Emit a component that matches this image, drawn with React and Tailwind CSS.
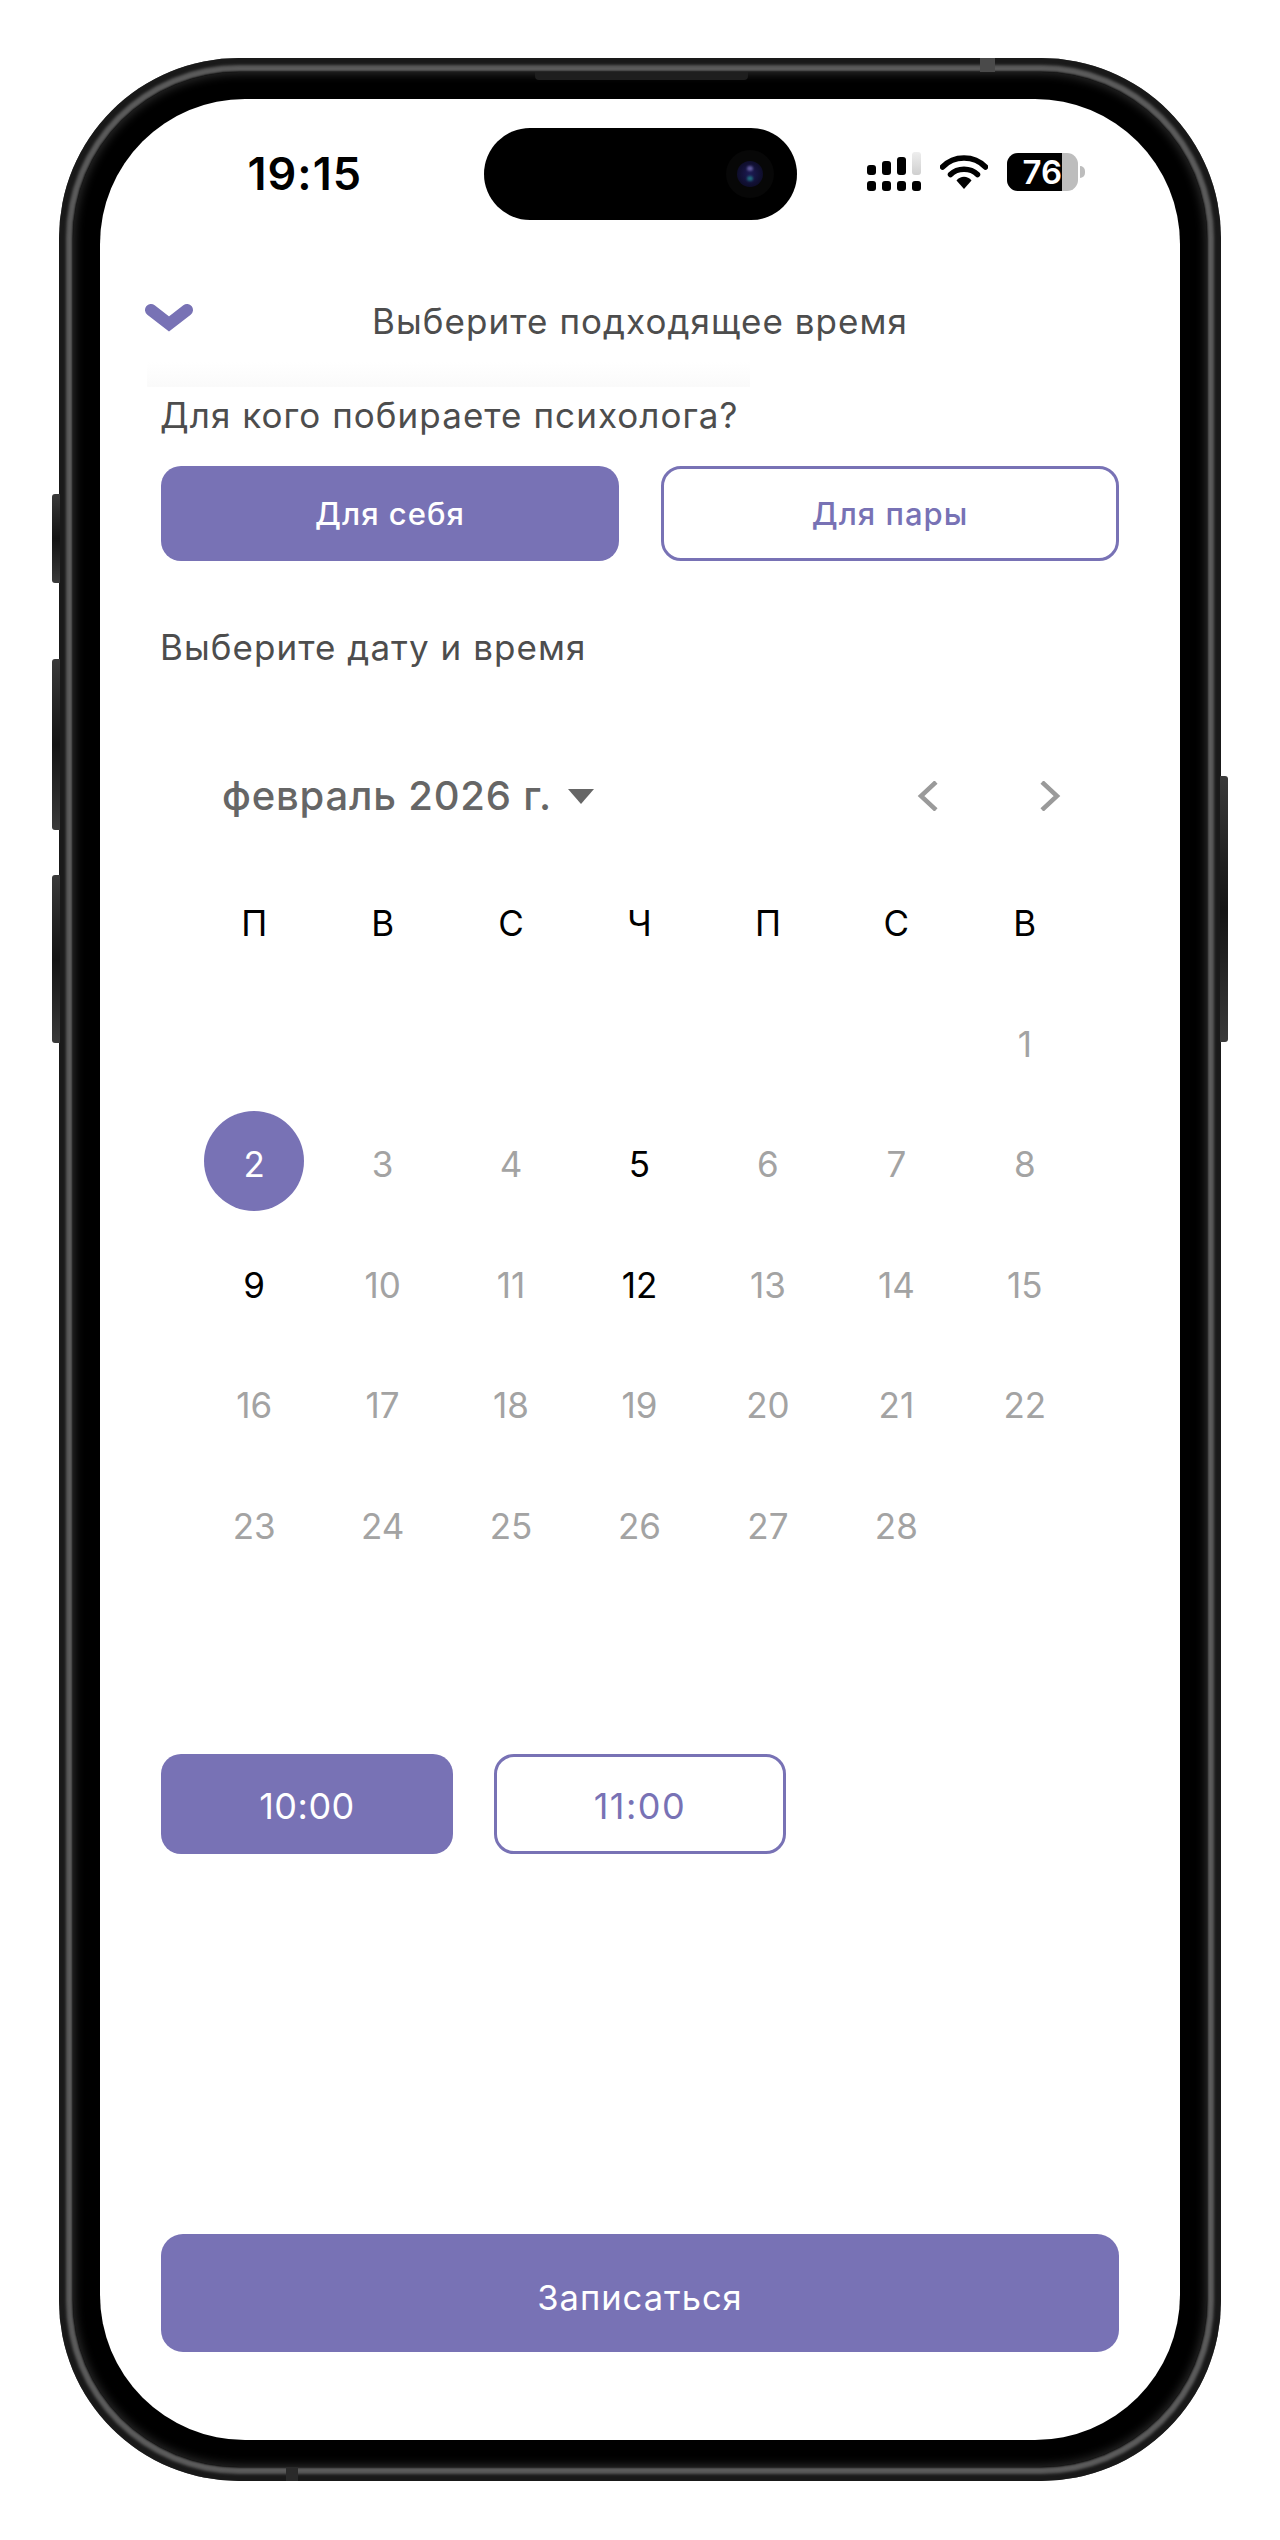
const ff = "font-['Inter','Noto_Sans',sans-serif]";

function SideButton({ className }) {
  return <div className={"absolute bg-gradient-to-b from-[#3a3a3a] via-[#141414] to-[#3a3a3a] " + className} />;
}

function StatusIcons() {
  return (
    <div className="flex items-center">
      <svg width="54" height="40" viewBox="0 0 54 40" className="mr-[19px]">
        <defs>
          <linearGradient id="sg" x1="0" y1="0" x2="0" y2="1">
            <stop offset="0" stopColor="#eeeeee" />
            <stop offset="1" stopColor="#cfcfcf" />
          </linearGradient>
        </defs>
        <rect x="0" y="13" width="9" height="10" rx="3" fill="#000" />
        <rect x="15" y="9" width="9" height="14" rx="3" fill="#000" />
        <rect x="30" y="5" width="9" height="18" rx="3" fill="#000" />
        <rect x="45" y="0" width="9" height="23" rx="3" fill="url(#sg)" />
        <rect x="0" y="29" width="9" height="10" rx="3" fill="#000" />
        <rect x="15" y="29" width="9" height="10" rx="3" fill="#000" />
        <rect x="30" y="29" width="9" height="10" rx="3" fill="#000" />
        <rect x="45" y="29" width="9" height="10" rx="3" fill="#000" />
      </svg>
      <svg width="48" height="36" viewBox="0 0 48 36" className="mr-[19px]">
        <path d="M2.5 13 C14 1 34 1 45.5 13" fill="none" stroke="#000" strokeWidth="5.5" strokeLinecap="round" />
        <path d="M10.5 20.5 C17.5 13.5 30.5 13.5 37.5 20.5" fill="none" stroke="#000" strokeWidth="5.5" strokeLinecap="round" />
        <path d="M16.5 26.5 C20.5 21.5 27.5 21.5 31.5 26.5 L24 35 Z" fill="#000" />
      </svg>
      <div className="relative flex h-[38px] w-[71px] overflow-hidden rounded-[11px] bg-[#bdbdbd]">
        <div className="flex w-[55px] items-center justify-end bg-black text-[33px] leading-none font-semibold text-white">76</div>
      </div>
      <div className="ml-[2px] h-[12px] w-[5px] rounded-r-full bg-[#bdbdbd]" />
    </div>
  );
}

function Day({ d, state }) {
  if (!d) return <div className="h-[120.5px]" />;
  if (state === "selected") {
    return (
      <div className="flex h-[120.5px] items-center justify-center">
        <div className="mb-[3px] flex size-[100px] items-center justify-center rounded-full bg-[#7872b5] pt-[6px] text-[35px] text-white">{d}</div>
      </div>
    );
  }
  return (
    <div className={"flex h-[120.5px] items-center justify-center pt-[3px] text-[35px] " + (state === "active" ? "text-black" : "text-[#a3a3a3]")}>{d}</div>
  );
}

export default function App() {
  const weekdays = ["П", "В", "С", "Ч", "П", "С", "В"];
  const blanks = [null, null, null, null, null, null];
  const days = [...blanks, ...Array.from({ length: 28 }, (_, i) => i + 1)];
  const active = [5, 9, 12];
  return (
    <div className={"h-[2540px] w-[1280px] bg-white pt-[58px] pl-[59px] " + ff}>
      <div className="relative h-[2423px] w-[1162px]">
        <SideButton className="top-[436px] -left-[7px] h-[89px] w-[8px] rounded-l-[3px]" />
        <SideButton className="top-[601px] -left-[7px] h-[171px] w-[8px] rounded-l-[3px]" />
        <SideButton className="top-[817px] -left-[7px] h-[168px] w-[8px] rounded-l-[3px]" />
        <SideButton className="top-[718px] -right-[7px] h-[266px] w-[8px] rounded-r-[3px]" />
        <div className="h-full w-full rounded-[180px] bg-[#5c5c5c] p-[14px] shadow-[inset_0_0_3px_7px_#191919]">
          <div className="relative h-full w-full rounded-[166px] bg-black p-[27px] shadow-[0_0_2px_1px_#141414,inset_0_0_10px_2px_#2a2a2a]">
            <div className="absolute top-0 left-[462px] h-[8px] w-[213px] rounded-b-[4px] bg-[#1e1e1e]" />
            <div className="flex h-full w-full flex-col overflow-hidden rounded-[145px] bg-white">
              {/* status bar */}
              <div className="flex h-[120px] items-start pt-[29px]">
                <div className="flex h-[92px] w-[384px] items-center justify-end pr-[122px] pb-[2px]">
                  <span className="text-[45px] leading-none font-semibold tracking-[1px] text-black">19:15</span>
                </div>
                <div className="relative h-[92px] w-[313px] rounded-full bg-black">
                  <div className="absolute top-[22px] left-[242px] flex size-[48px] items-center justify-center rounded-full bg-[#070707]">
                    <div className="relative size-[26px] rounded-full bg-[radial-gradient(circle,#1d1b55_0%,#100f30_60%,#08081a_100%)]">
                      <div className="absolute top-[5px] left-[10px] h-[5px] w-[6px] rounded-full bg-[#5f5a9a] blur-[1px]" />
                      <div className="absolute top-[15px] left-[10px] h-[5px] w-[6px] rounded-full bg-[#1f6a7a] blur-[1px]" />
                    </div>
                  </div>
                </div>
                <div className="flex h-[92px] items-center pb-[4px] pl-[70px]">
                  <StatusIcons />
                </div>
              </div>

              {/* header */}
              <div className="relative mt-[72px] flex h-[60px] items-center justify-center">
                <svg width="50" height="30" viewBox="0 0 50 30" className="absolute top-[12px] left-[44px]">
                  <path d="M7 7 L25 21 L43 7" fill="none" stroke="#7872b5" strokeWidth="12" strokeLinecap="round" strokeLinejoin="miter" />
                </svg>
                <h1 className="text-[35px] leading-none font-normal tracking-[1.05px] text-[#4d4d4d]">Выберите подходящее время</h1>
              </div>

              {/* faded scroll edge */}
              <div className="mt-[11px] ml-[47px] h-[25px] w-[603px] bg-gradient-to-b from-white to-[#fafafa]" />

              {/* body */}
              <div className="flex flex-1 flex-col px-[61px]">
                <p className="mt-[8px] -ml-[1px] flex h-[42px] items-center pb-[2px] text-[35px] tracking-[1.05px] text-[#4d4d4d]">Для кого побираете психолога?</p>

                <div className="mt-[29px] grid grid-cols-2 gap-x-[42px]">
                  <button className="h-[95px] rounded-[20px] bg-[#7872b5] pt-[2px] text-[31px] font-medium tracking-[1px] text-white">Для себя</button>
                  <button className="h-[95px] rounded-[20px] border-[3px] border-[#7872b5] bg-white pt-[2px] text-[31px] font-medium tracking-[1px] text-[#7872b5]">Для пары</button>
                </div>

                <p className="mt-[66px] -ml-[1px] flex h-[42px] items-center pb-[1px] text-[35px] tracking-[1.05px] text-[#4d4d4d]">Выберите дату и время</p>

                {/* calendar */}
                <div className="mt-[97px] flex h-[60px] items-center pr-[58px] pl-[61px]">
                  <span className="text-[40px] font-medium tracking-[0.8px] text-[#666666]">февраль 2026 г.</span>
                  <svg width="26" height="15" viewBox="0 0 26 15" className="ml-[16px]">
                    <path d="M0 0 H26 L13 15 Z" fill="#666666" />
                  </svg>
                  <svg width="22" height="30" viewBox="0 0 22 30" className="mr-[100px] ml-auto">
                    <path d="M19 1 L4 15 L19 29" fill="none" stroke="#9a9a9a" strokeWidth="4.5" />
                  </svg>
                  <svg width="22" height="30" viewBox="0 0 22 30">
                    <path d="M3 1 L18 15 L3 29" fill="none" stroke="#9a9a9a" strokeWidth="4.5" />
                  </svg>
                </div>

                <div className="mt-[66px] ml-[29px] grid w-[899px] grid-cols-7">
                  {weekdays.map((w, i) => (
                    <div key={i} className="flex h-[60px] items-center justify-center pt-[3px] text-[35px] text-black">{w}</div>
                  ))}
                </div>

                <div className="mt-[30px] ml-[29px] grid w-[899px] grid-cols-7">
                  {days.map((d, i) => (
                    <Day key={i} d={d} state={d === 2 ? "selected" : active.includes(d) ? "active" : "muted"} />
                  ))}
                </div>

                <div className="mt-[169.5px] flex gap-x-[41px]">
                  <button className="h-[100px] w-[292px] rounded-[20px] bg-[#7872b5] pt-[4px] text-[36px] tracking-[0.5px] text-white">10:00</button>
                  <button className="h-[100px] w-[292px] rounded-[20px] border-[3px] border-[#7872b5] bg-white pt-[4px] text-[36px] tracking-[1.5px] text-[#7872b5]">11:00</button>
                </div>

                <button className="mt-[380px] h-[118px] w-full rounded-[22px] bg-[#7872b5] pt-[9px] text-[34.5px] tracking-[1px] text-white">Записаться</button>
              </div>
            </div>
          </div>
        </div>
        <div className="absolute top-0 left-[921px] h-[14px] w-[15px] bg-[#4a4a4a]" />
        <div className="absolute bottom-0 left-[227px] h-[14px] w-[12px] bg-[#2a2a2a]" />
      </div>
    </div>
  );
}
